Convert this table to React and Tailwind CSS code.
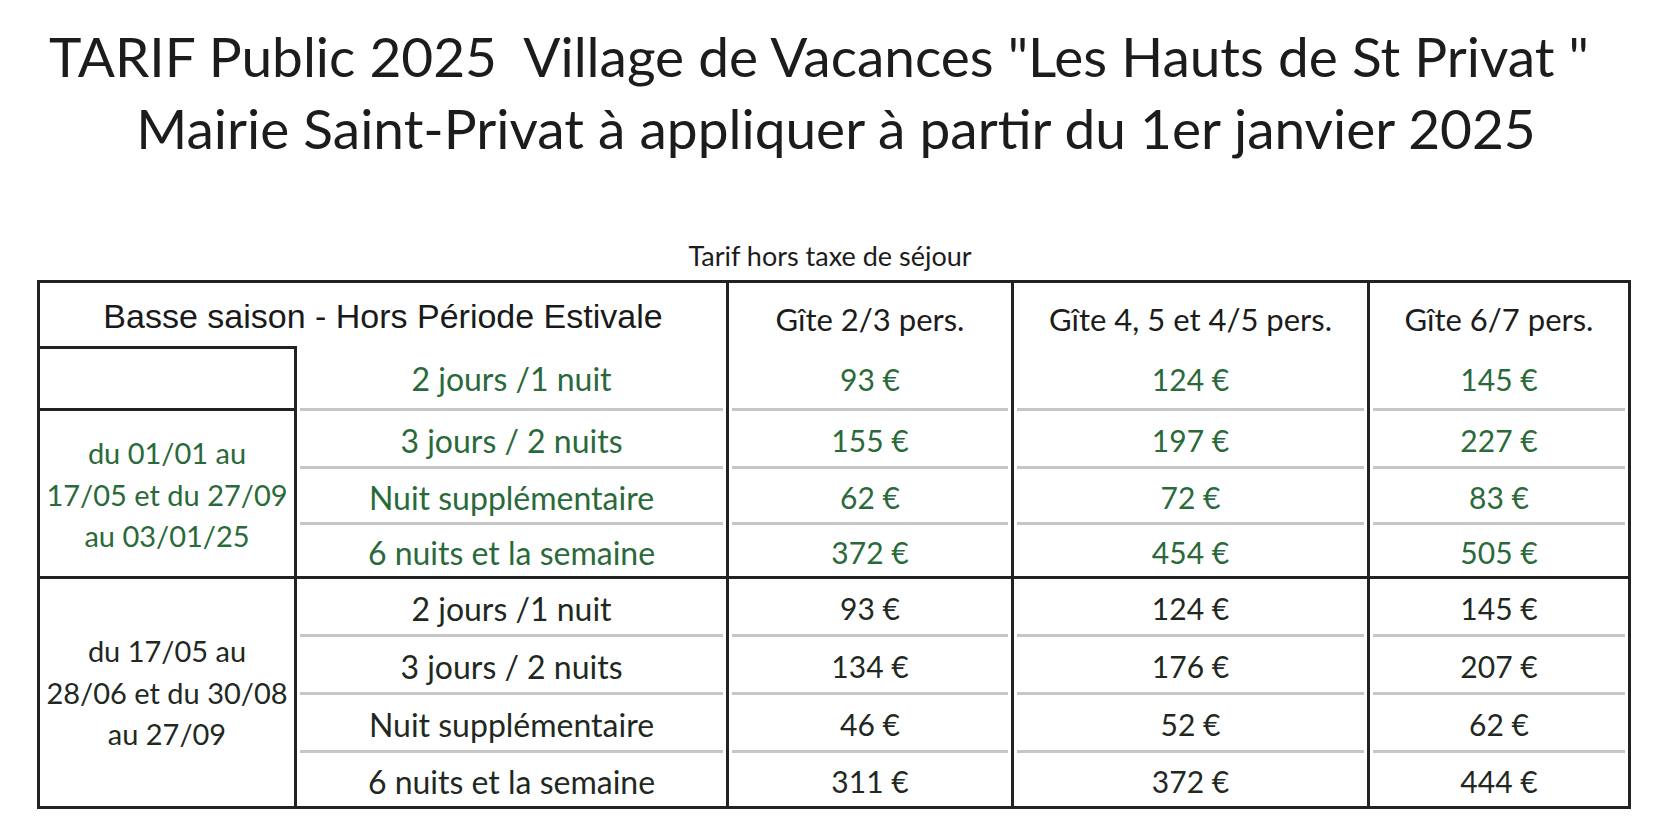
const lowSeason = [
  ["2 jours /1 nuit", "93 €", "124 €", "145 €"],
  ["3 jours / 2 nuits", "155 €", "197 €", "227 €"],
  ["Nuit supplémentaire", "62 €", "72 €", "83 €"],
  ["6 nuits et la semaine", "372 €", "454 €", "505 €"],
];

const midSeason = [
  ["2 jours /1 nuit", "93 €", "124 €", "145 €"],
  ["3 jours / 2 nuits", "134 €", "176 €", "207 €"],
  ["Nuit supplémentaire", "46 €", "52 €", "62 €"],
  ["6 nuits et la semaine", "311 €", "372 €", "444 €"],
];

const gites = ["Gîte 2/3 pers.", "Gîte 4, 5 et 4/5 pers.", "Gîte 6/7 pers."];

function Cell({ text, color, size, last, line }) {
  return (
    <div
      className={`flex flex-col ${last ? "" : "border-r-[3px] border-[#222]"} ${
        line === "thick" ? "border-b-[3px] border-b-[#222]" : ""
      }`}
    >
      <div
        className={`flex-1 flex items-center justify-center pt-[4px] ${size} ${color}`}
      >
        {text}
      </div>
      {line === "gray" && <div className="h-[3px] mx-[3px] bg-[#c6c6c6]" />}
    </div>
  );
}

function Row({ row, color, line }) {
  return (
    <>
      {row.map((text, i) => (
        <Cell
          key={i}
          text={text}
          color={color}
          size={i === 0 ? "text-[32px]" : "text-[30px]"}
          last={i === row.length - 1}
          line={line}
        />
      ))}
    </>
  );
}

export default function App() {
  return (
    <div className="w-[1672px] h-[818px] bg-white overflow-hidden font-['Lato',sans-serif] text-[#1c1c1c]">
      <div className="pt-[20px] text-center text-[55px] leading-[72px]">
        <p className="whitespace-pre pr-[34px]">
          TARIF Public 2025  Village de Vacances "Les Hauts de St Privat "
        </p>
        <p>Mairie Saint-Privat à appliquer à partir du 1er janvier 2025</p>
      </div>

      <p className="mt-[76px] ml-[37px] w-[1586px] text-center text-[27px] leading-[31px]">
        Tarif hors taxe de séjour
      </p>

      <div className="mt-[9px] ml-[37px] w-fit border-[3px] border-[#222] grid grid-cols-[257px_432px_285px_356px_258px] grid-rows-[63px_65px_58px_56px_54px_58px_58px_58px_53px]">
        <div className="col-span-2 border-r-[3px] border-[#222] flex items-center justify-center pt-[4px] font-['Liberation_Sans',sans-serif] text-[34px] text-[#1a1a1a]">
          Basse saison - Hors Période Estivale
        </div>
        {gites.map((g, i) => (
          <div
            key={g}
            className={`flex items-center justify-center pt-[10px] text-[31px] ${
              i < gites.length - 1 ? "border-r-[3px] border-[#222]" : ""
            }`}
          >
            {g}
          </div>
        ))}

        <div className="border-y-[3px] border-r-[3px] border-[#222]" />
        <Row row={lowSeason[0]} color="text-[#2a6a3a]" line="gray" />

        <div className="row-span-3 border-r-[3px] border-b-[3px] border-[#222] flex items-center justify-center text-center text-[29px] leading-[41.5px] text-[#2a6a3a] pt-[2px]">
          <p>
            du 01/01 au
            <br />
            17/05 et du 27/09
            <br />
            au 03/01/25
          </p>
        </div>
        <Row row={lowSeason[1]} color="text-[#2a6a3a]" line="gray" />
        <Row row={lowSeason[2]} color="text-[#2a6a3a]" line="gray" />
        <Row row={lowSeason[3]} color="text-[#2a6a3a]" line="thick" />

        <div className="row-span-4 border-r-[3px] border-[#222] flex items-center justify-center text-center text-[29px] leading-[41.5px] text-[#1f291f]">
          <p>
            du 17/05 au
            <br />
            28/06 et du 30/08
            <br />
            au 27/09
          </p>
        </div>
        <Row row={midSeason[0]} color="text-[#1f291f]" line="gray" />
        <Row row={midSeason[1]} color="text-[#1f291f]" line="gray" />
        <Row row={midSeason[2]} color="text-[#1f291f]" line="gray" />
        <Row row={midSeason[3]} color="text-[#1f291f]" />
      </div>
    </div>
  );
}
